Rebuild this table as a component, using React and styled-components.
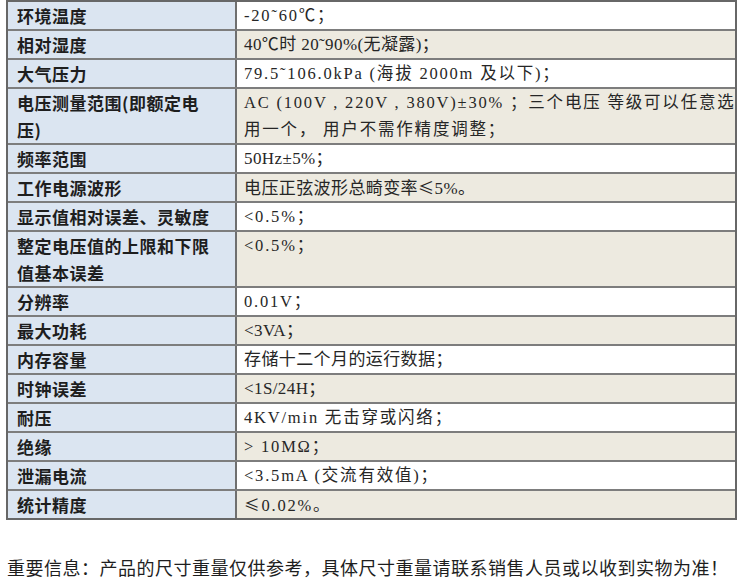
import React from "react";
import styled, { createGlobalStyle } from "styled-components";

const Global = createGlobalStyle`
  html, body { margin: 0; padding: 0; background: #ffffff; }
  body { width: 750px; height: 579px; overflow: hidden; }
`;

const Page = styled.div`
  padding: 0 13px 0 6px;
  display: flex;
  flex-direction: column;
`;

const Table = styled.div`
  width: 731px;
  box-sizing: border-box;
  border: 2px solid #676767;
  border-bottom-width: 0;
  display: flex;
  flex-direction: column;
`;

const Row = styled.div`
  display: grid;
  grid-template-columns: 229px 1fr;
  height: ${(p) => (p.$lines === 2 ? 56 : 29)}px;
  box-sizing: border-box;
  border-bottom: 2px solid ${(p) => (p.$last ? "#676767" : "#7d7d7d")};
`;

const Label = styled.div`
  background: #dbe5f1;
  border-right: 2px solid #6f6f6f;
  padding: 0 0 0 9px;
  font-family: "Noto Sans CJK SC", "Noto Sans", sans-serif;
  font-weight: 700;
  font-size: 17px;
  letter-spacing: 0.5px;
  line-height: 27px;
  color: #1e1e1e;
  white-space: nowrap;
  overflow: hidden;
`;

const Value = styled.div`
  background: ${(p) => (p.$shade ? "#edeae0" : "#ffffff")};
  padding: 0 0 0 7px;
  font-family: "Liberation Serif", "Noto Sans CJK SC", serif;
  font-size: ${(p) => (p.$wide ? 16.5 : 17)}px;
  letter-spacing: ${(p) => (p.$wide ? 1.8 : 0.4)}px;
  line-height: 27px;
  color: #262626;
  white-space: nowrap;
  overflow: hidden;
`;

const Sym = styled.span`
  font-family: "Noto Sans CJK SC", sans-serif;
  font-size: 0.95em;
`;

const Note = styled.p`
  margin: 37px 0 0;
  padding-left: 1px;
  font-family: "Noto Sans CJK SC", "Noto Sans", sans-serif;
  font-size: 18px;
  letter-spacing: 0.5px;
  line-height: 20px;
  color: #1e1e1e;
`;

const rows = [
  { k: ["环境温度"], v: ["-20˜60℃；"], wide: true },
  { k: ["相对湿度"], v: ["40℃时 20˜90%(无凝露)；"] },
  { k: ["大气压力"], v: ["79.5˜106.0kPa (海拔 2000m 及以下)；"], wide: true },
  {
    k: ["电压测量范围(即额定电", "压)"],
    v: ["AC (100V , 220V , 380V)±30% ；三个电压 等级可以任意选", "用一个， 用户不需作精度调整；"],
    wide: true,
  },
  { k: ["频率范围"], v: ["50Hz±5%；"] },
  { k: ["工作电源波形"], v: [<>电压正弦波形总畸变率<Sym>≤</Sym>5%。</>] },
  { k: ["显示值相对误差、灵敏度"], v: ["<0.5%；"], wide: true },
  { k: ["整定电压值的上限和下限", "值基本误差"], v: ["<0.5%；"], wide: true },
  { k: ["分辨率"], v: ["0.01V；"], wide: true },
  { k: ["最大功耗"], v: ["<3VA；"] },
  { k: ["内存容量"], v: ["存储十二个月的运行数据；"] },
  { k: ["时钟误差"], v: ["<1S/24H；"] },
  { k: ["耐压"], v: ["4KV/min 无击穿或闪络；"], wide: true },
  { k: ["绝缘"], v: ["> 10MΩ；"], wide: true },
  { k: ["泄漏电流"], v: ["<3.5mA (交流有效值)；"], wide: true },
  { k: ["统计精度"], v: [<><Sym>≤</Sym>0.02%。</>], wide: true },
];

const Lines = ({ items }) =>
  items.map((t, i) => (
    <React.Fragment key={i}>
      {i > 0 && <br />}
      {t}
    </React.Fragment>
  ));

export default function App() {
  return (
    <>
      <Global />
      <Page>
        <Table>
          {rows.map((r, i) => (
            <Row
              key={i}
              $lines={Math.max(r.k.length, r.v.length)}
              $last={i === rows.length - 1}
            >
              <Label>
                <Lines items={r.k} />
              </Label>
              <Value $shade={i % 2 === 1} $wide={r.wide}>
                <Lines items={r.v} />
              </Value>
            </Row>
          ))}
        </Table>
        <Note>重要信息：产品的尺寸重量仅供参考，具体尺寸重量请联系销售人员或以收到实物为准！</Note>
      </Page>
    </>
  );
}
